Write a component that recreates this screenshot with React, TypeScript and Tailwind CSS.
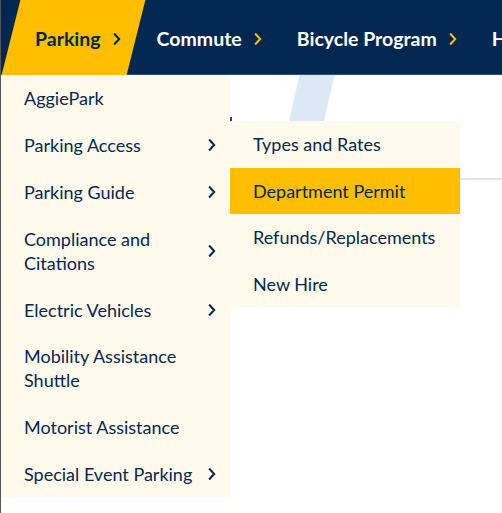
import React from "react";

function Chevron({ className }: { className?: string }) {
  return (
    <svg width="8" height="12" viewBox="0 0 8 12" className={className} fill="none">
      <path d="M1.8 1.2 L6.2 6 L1.8 10.8" stroke="currentColor" strokeWidth="2" strokeLinecap="square" />
    </svg>
  );
}

const mainItems: { label: string; sub?: boolean }[] = [
  { label: "AggiePark" },
  { label: "Parking Access", sub: true },
  { label: "Parking Guide", sub: true },
  { label: "Compliance and Citations", sub: true },
  { label: "Electric Vehicles", sub: true },
  { label: "Mobility Assistance Shuttle" },
  { label: "Motorist Assistance" },
  { label: "Special Event Parking", sub: true },
];

const subItems = ["Types and Rates", "Department Permit", "Refunds/Replacements", "New Hire"];

export default function App() {
  return (
    <div className="relative w-[502px] h-[513px] overflow-hidden bg-white border-l border-[#555555] font-['Lato',sans-serif]">
      <nav className="relative h-[75px] bg-[#022851] border-b border-[#2c5384] flex items-center pl-[10px] pt-[3px]">
        <a className="relative flex items-center self-stretch -mt-[3px] pt-[3px] -mb-px pl-[24px] pr-[15px] gap-[12px]">
          <span className="absolute inset-0 bg-[#ffbf00] -skew-x-[14deg]" />
          <span className="relative text-[19.5px] font-bold text-[#022851]">Parking</span>
          <Chevron className="relative text-[#022851]" />
        </a>
        {["Commute", "Bicycle Program", "Housing"].map((t) => (
          <a key={t} className="flex items-center pl-[21px] pr-[14px] gap-[12px] shrink-0">
            <span className="text-[19.5px] font-bold text-white whitespace-nowrap">{t}</span>
            <Chevron className="text-[#ffbf00]" />
          </a>
        ))}
      </nav>

      {/* background decorations */}
      <div className="absolute left-[287px] top-[75px] w-[35px] h-[100px] bg-[#dbe8f5] -skew-x-[13deg]" />
      <div className="absolute left-[229px] top-[178px] w-[280px] h-[2px] bg-[#e3e5e8]" />
      <div className="absolute left-[229px] top-[117px] w-[2px] h-[4px] bg-[#1d4f91]" />

      {/* main dropdown */}
      <ul className="absolute left-0 top-[75px] w-[229px] bg-[#fffaeb]">
        {mainItems.map((it) => (
          <li key={it.label} className="flex items-center justify-between pl-[23px] pr-[14px] py-[11.4px]">
            <span className="w-[180px] text-[18px] leading-[24px] text-[#022851]">{it.label}</span>
            {it.sub && <Chevron className="text-[#022851]" />}
          </li>
        ))}
      </ul>

      {/* submenu */}
      <ul className="absolute left-[229px] top-[121px] w-[230px] bg-[#fffaeb]">
        {subItems.map((t) => (
          <li
            key={t}
            className={
              "pl-[23px] pr-[10px] py-[11.25px] text-[18px] leading-[24px] text-[#022851] whitespace-nowrap " +
              (t === "Department Permit" ? "bg-[#ffbf00]" : "")
            }
          >
            {t}
          </li>
        ))}
      </ul>
    </div>
  );
}
